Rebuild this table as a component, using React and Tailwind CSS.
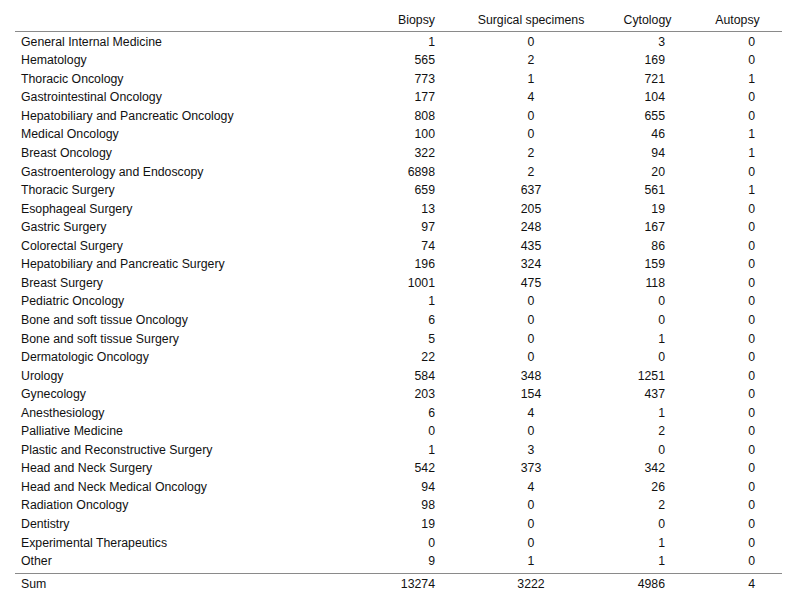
const rows = [
  ['General Internal Medicine', 1, 0, 3, 0],
  ['Hematology', 565, 2, 169, 0],
  ['Thoracic Oncology', 773, 1, 721, 1],
  ['Gastrointestinal Oncology', 177, 4, 104, 0],
  ['Hepatobiliary and Pancreatic Oncology', 808, 0, 655, 0],
  ['Medical Oncology', 100, 0, 46, 1],
  ['Breast Oncology', 322, 2, 94, 1],
  ['Gastroenterology and Endoscopy', 6898, 2, 20, 0],
  ['Thoracic Surgery', 659, 637, 561, 1],
  ['Esophageal Surgery', 13, 205, 19, 0],
  ['Gastric Surgery', 97, 248, 167, 0],
  ['Colorectal Surgery', 74, 435, 86, 0],
  ['Hepatobiliary and Pancreatic Surgery', 196, 324, 159, 0],
  ['Breast Surgery', 1001, 475, 118, 0],
  ['Pediatric Oncology', 1, 0, 0, 0],
  ['Bone and soft tissue Oncology', 6, 0, 0, 0],
  ['Bone and soft tissue Surgery', 5, 0, 1, 0],
  ['Dermatologic Oncology', 22, 0, 0, 0],
  ['Urology', 584, 348, 1251, 0],
  ['Gynecology', 203, 154, 437, 0],
  ['Anesthesiology', 6, 4, 1, 0],
  ['Palliative Medicine', 0, 0, 2, 0],
  ['Plastic and Reconstructive Surgery', 1, 3, 0, 0],
  ['Head and Neck Surgery', 542, 373, 342, 0],
  ['Head and Neck Medical Oncology', 94, 4, 26, 0],
  ['Radiation Oncology', 98, 0, 2, 0],
  ['Dentistry', 19, 0, 0, 0],
  ['Experimental Therapeutics', 0, 0, 1, 0],
  ['Other', 9, 1, 1, 0],
];

const grid = 'grid grid-cols-[365px_73px_156px_77px_96px]';

function Row({ r, h }) {
  return (
    <div className={`${grid} ${h} leading-[18.55px]`}>
      <div className="pl-[6px]">{r[0]}</div>
      <div className="text-right pr-[18px]">{r[1]}</div>
      <div className="text-center">{r[2]}</div>
      <div className="text-right pr-[21px]">{r[3]}</div>
      <div className="text-right pr-[27px]">{r[4]}</div>
    </div>
  );
}

export default function App() {
  return (
    <div className="w-[800px] h-[605px] bg-white text-[#111] text-[12.3px] font-['Liberation_Sans',Arial,sans-serif]">
      <div className="ml-[15px] w-[767px]">
        {/* header */}
        <div className={`${grid} h-[32px] pt-[11px] leading-[18.55px] border-b border-[#8a8a8a]`}>
          <div></div>
          <div className="text-center">Biopsy</div>
          <div className="text-center">Surgical specimens</div>
          <div className="text-center">Cytology</div>
          <div className="text-center pl-[7px]">Autopsy</div>
        </div>
        <div className="pt-[0.75px] pb-[2.3px] border-b border-[#8a8a8a]">
          {rows.map((r) => (
            <Row key={r[0]} r={r} h="h-[18.55px]" />
          ))}
        </div>
        <Row r={['Sum', 13274, 3222, 4986, 4]} h="h-[20px] pt-[1px]" />
      </div>
    </div>
  );
}
